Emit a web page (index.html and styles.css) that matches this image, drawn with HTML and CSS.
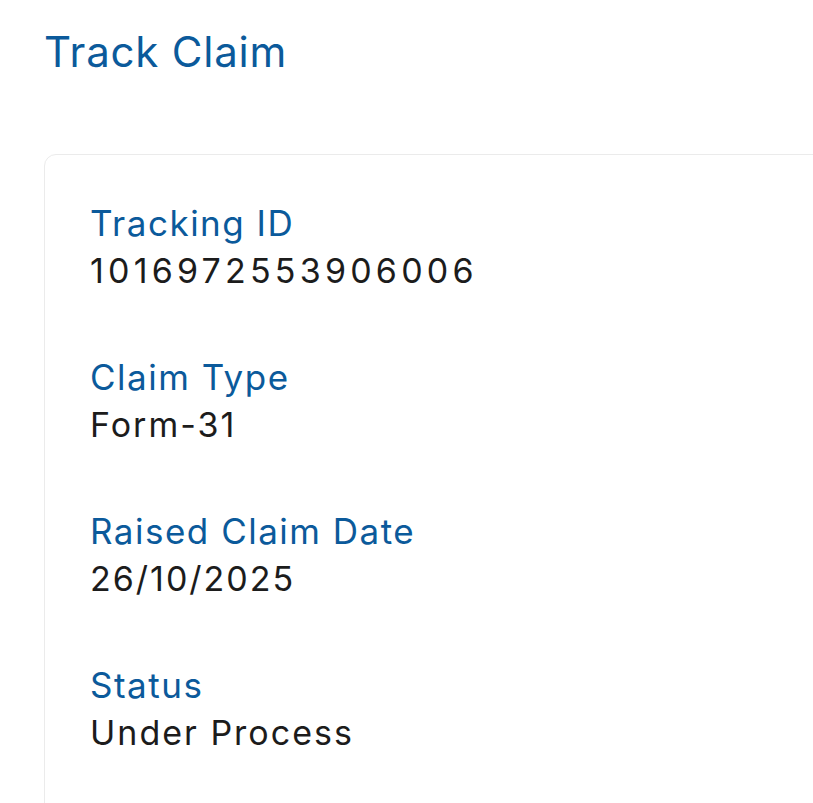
FILE: index.html
```html
<!DOCTYPE html>
<html>
<head>
<meta charset="utf-8">
<link rel="stylesheet" href="styles.css">
</head>
<body>
<div class="page">
  <h1 class="title">Track Claim</h1>
  <div class="card">
    <div class="field">
      <div class="label">Tracking ID</div>
      <div class="value value-number">1016972553906006</div>
    </div>
    <div class="field">
      <div class="label">Claim Type</div>
      <div class="value">Form-31</div>
    </div>
    <div class="field">
      <div class="label">Raised Claim Date</div>
      <div class="value">26/10/2025</div>
    </div>
    <div class="field">
      <div class="label">Status</div>
      <div class="value">Under Process</div>
    </div>
  </div>
</div>
</body>
</html>
```
FILE: styles.css
```css
html, body {
  margin: 0;
  padding: 0;
  background: #ffffff;
  overflow: hidden;
  height: 100%;
}
body {
  font-family: "Inter", "Noto Sans", sans-serif;
}
.page {
  padding: 24px 0 0 44px;
}
.title {
  margin: 0;
  font-size: 42px;
  line-height: 56px;
  font-weight: 400;
  letter-spacing: 0.8px;
  color: #0b5a9b;
}
.card {
  margin-top: 74px;
  width: 820px;
  border: 1.5px solid #ebebeb;
  border-radius: 12px;
  padding: 44px 0 0 45px;
  min-height: 700px;
  display: flex;
  flex-direction: column;
  gap: 58px;
}
.field {
  display: flex;
  flex-direction: column;
}
.label {
  font-size: 35px;
  line-height: 48px;
  letter-spacing: 1.5px;
  color: #0b5a9b;
}
.value {
  font-size: 34px;
  line-height: 48px;
  letter-spacing: 2px;
  color: #1c1c1c;
}
.value-number {
  letter-spacing: 4.2px;
}
```
